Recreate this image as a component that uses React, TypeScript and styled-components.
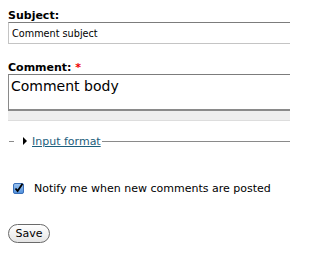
import { createGlobalStyle, styled } from "styled-components";

const GlobalStyle = createGlobalStyle`
  html, body {
    margin: 0;
    padding: 0;
    background: #fff;
  }
  body {
    font-family: "DejaVu Sans", Verdana, sans-serif;
    color: #000;
  }
`;

const StyledPage = styled.div`
  width: 290px;
  height: 253px;
  overflow: hidden;
`;

const StyledForm = styled.form`
  display: flex;
  flex-direction: column;
  padding: 10px 0 0 8px;
  width: 340px;
`;

const StyledItem = styled.div<{ $gap: number }>`
  display: flex;
  flex-direction: column;
  margin-bottom: ${({ $gap }) => $gap}px;
`;

const StyledLabel = styled.label`
  font-size: 11px;
  font-weight: bold;
  line-height: 12px;
`;

const StyledRequired = styled.span`
  color: #e00;
`;

const StyledInput = styled.input`
  box-sizing: border-box;
  height: 22px;
  width: 100%;
  margin: 0;
  padding: 0 3px;
  border: 1px solid #c4c4c4;
  border-top-color: #7c7c7c;
  font-family: "DejaVu Sans", Verdana, sans-serif;
  font-size: 9.7px;
  color: #000;
  outline: none;
`;

const StyledTextarea = styled.textarea`
  box-sizing: border-box;
  display: block;
  height: 37px;
  width: 100%;
  margin: 0;
  padding: 3px 2px;
  border: 1px solid #c4c4c4;
  border-top-color: #7c7c7c;
  border-left-color: #8a8a8a;
  border-bottom: 2px solid #8a8a8a;
  font-family: "DejaVu Sans", Verdana, sans-serif;
  font-size: 14px;
  line-height: 17px;
  color: #000;
  resize: none;
  outline: none;
`;

const StyledGrippie = styled.div`
  height: 9px;
  background: #eee;
  border-bottom: 1px solid #ddd;
`;

const StyledFieldset = styled.div`
  display: flex;
  align-items: center;
  margin: 13px 0 0 1px;
  height: 14px;
`;

const StyledRule = styled.span<{ $grow?: boolean }>`
  display: block;
  height: 1px;
  background: #8a8a8a;
  width: ${({ $grow }) => ($grow ? "auto" : "5px")};
  flex: ${({ $grow }) => ($grow ? "1" : "none")};
`;

const StyledLegend = styled.a`
  display: flex;
  align-items: center;
  gap: 5px;
  padding: 0 1px 0 9px;
  font-size: 11px;
  color: #1c5e7c;
  text-decoration: underline;
`;

const StyledArrow = styled.span`
  width: 0;
  height: 0;
  border-top: 4px solid transparent;
  border-bottom: 4px solid transparent;
  border-left: 4px solid #000;
`;

const StyledCheckRow = styled.label`
  display: flex;
  align-items: center;
  gap: 10px;
  margin: 34px 0 0 5px;
  font-size: 11px;
  line-height: 13px;
`;

const StyledBox = styled.span`
  display: block;
  width: 11px;
  height: 11px;
`;

const StyledButton = styled.button`
  align-self: flex-start;
  margin-top: 29px;
  height: 19px;
  width: 42px;
  padding: 0;
  border: 1px solid #6a6a6a;
  border-radius: 10px;
  background: linear-gradient(#ffffff, #f0f0f0 60%, #e4e4e4);
  font-family: "DejaVu Sans", Verdana, sans-serif;
  font-size: 11px;
  color: #000;
`;

const CheckIcon = () => (
  <svg width='11' height='11' viewBox='0 0 11 11'>
    <defs>
      <linearGradient id='cb' x1='0' y1='0' x2='0' y2='1'>
        <stop offset='0' stopColor='#9cc4f0' />
        <stop offset='1' stopColor='#4f8fdc' />
      </linearGradient>
    </defs>
    <rect x='0.5' y='0.5' width='10' height='10' rx='1.5' fill='url(#cb)' stroke='#3a6fb8' />
    <path d='M2.5 5.5 L4.6 8 L9.5 0.8' fill='none' stroke='#000' strokeWidth='1.8' />
  </svg>
);

const App = (): JSX.Element => {
  return (
    <StyledPage>
      <GlobalStyle />
      <StyledForm onSubmit={(e) => e.preventDefault()}>
        <StyledItem $gap={18}>
          <StyledLabel htmlFor='subject'>Subject:</StyledLabel>
          <StyledInput id='subject' defaultValue='Comment subject' />
        </StyledItem>
        <StyledItem $gap={0}>
          <StyledLabel htmlFor='comment'>
            Comment: <StyledRequired>*</StyledRequired>
          </StyledLabel>
          <StyledTextarea id='comment' defaultValue='Comment body' />
          <StyledGrippie />
        </StyledItem>
        <StyledFieldset>
          <StyledRule />
          <StyledLegend href='#'>
            <StyledArrow />
            Input format
          </StyledLegend>
          <StyledRule $grow />
        </StyledFieldset>
        <StyledCheckRow>
          <StyledBox>
            <CheckIcon />
          </StyledBox>
          Notify me when new comments are posted
        </StyledCheckRow>
        <StyledButton type='submit'>Save</StyledButton>
      </StyledForm>
    </StyledPage>
  );
};

export default App;
